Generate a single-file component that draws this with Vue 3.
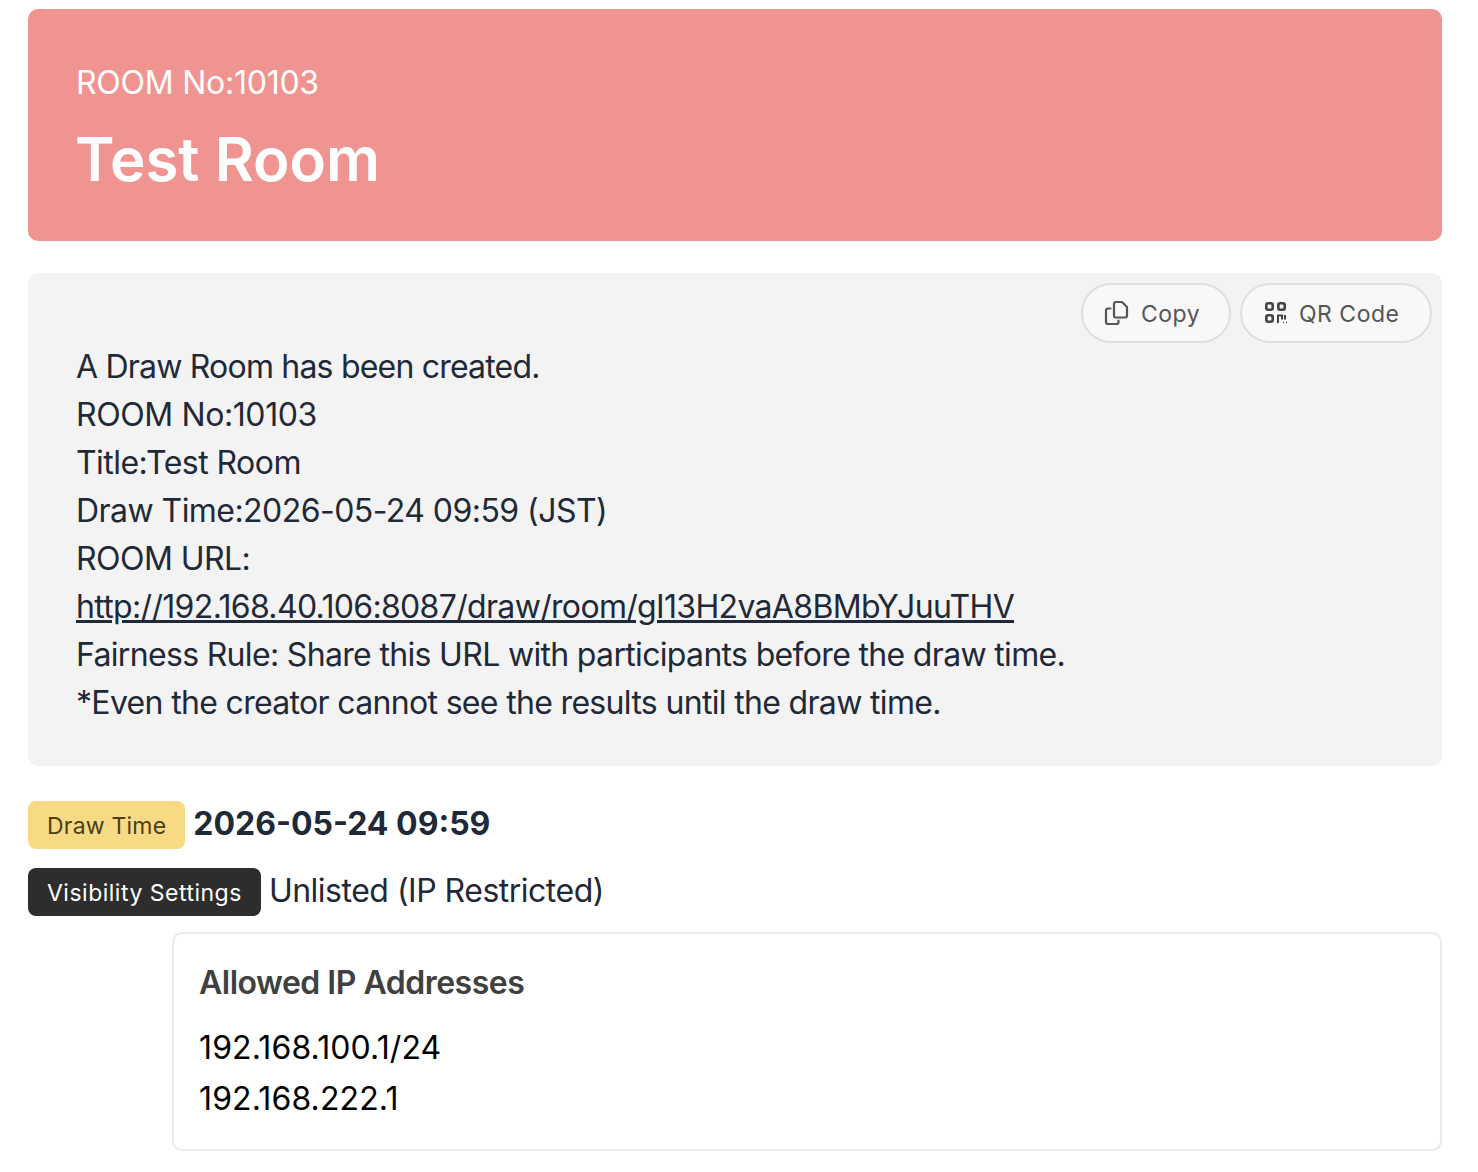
<script setup>
const lines = [
  { text: 'A Draw Room has been created.', cls: 'lead' },
  { text: 'ROOM No:10103', cls: 'num' },
  { text: 'Title:Test Room', cls: 'mid' },
  { text: 'Draw Time:2026-05-24 09:59 (JST)', cls: 'mid' },
  { text: 'ROOM URL:', cls: 'mid' },
];
const after = [
  'Fairness Rule: Share this URL with participants before the draw time.',
  '*Even the creator cannot see the results until the draw time.',
];
</script>

<template>
  <div class="page">
    <header class="hero">
      <p class="no">ROOM No:10103</p>
      <h1>Test Room</h1>
    </header>
    <section class="info">
      <div class="actions">
        <button class="btn copy">
          <svg class="ico" width="26" height="26" viewBox="0 0 26 26" fill="none" stroke="#555" stroke-width="2.200" stroke-linejoin="round" stroke-linecap="round">
            <path d="M13 2h6l5 5v8.500a2 2 0 0 1-2 2h-9a2 2 0 0 1-2-2V4a2 2 0 0 1 2-2z" />
            <path d="M7.500 8.500H5a2 2 0 0 0-2 2V22a2 2 0 0 0 2 2h8.500a2 2 0 0 0 2-2v-1.500" />
          </svg>
          <span class="lbl">Copy</span>
        </button>
        <button class="btn qr">
          <svg class="ico" width="24" height="24" viewBox="0 0 24 24" fill="none" stroke="#444" stroke-width="2.600">
            <rect x="2.300" y="2.300" width="6.400" height="6.400" rx="2" />
            <rect x="14.300" y="2.300" width="6.400" height="6.400" rx="2" />
            <rect x="2.300" y="14.300" width="6.400" height="6.400" rx="2" />
            <path d="M14 22v-7.500h4v4M21 14v4.500" stroke-width="2" />
            <path d="M19 21.500h1M22 21.500h1" stroke-width="1.600" />
          </svg>
          <span class="lbl">QR Code</span>
        </button>
      </div>
      <div class="msg">
        <div v-for="l in lines" :key="l.text" :class="l.cls">{{ l.text }}</div>
        <div class="wide"><a href="#">http://192.168.40.106:8087/draw/room/gI13H2vaA8BMbYJuuTHV</a></div>
        <div v-for="l in after" :key="l" class="wide">{{ l }}</div>
      </div>
    </section>
    <div class="row first">
      <span class="badge yellow">Draw Time</span>
      <strong>2026-05-24 09:59</strong>
    </div>
    <div class="row second">
      <span class="badge dark">Visibility Settings</span>
      <span class="vis">Unlisted (IP Restricted)</span>
    </div>
    <section class="ips">
      <h2>Allowed IP Addresses</h2>
      <div class="ip">192.168.100.1/24</div>
      <div class="ip">192.168.222.1</div>
    </section>
  </div>
</template>

<style>
body { background: #fff; }
</style>

<style scoped>
.page {
  padding: 9px 36px 20px 28px;
  font-family: Inter, "Liberation Sans", sans-serif;
  color: #1f2937;
  font-size: 32px;
  line-height: 48px;
}
.hero {
  background: #f09492;
  color: #fff;
  border-radius: 10px;
  height: 232px;
  box-sizing: border-box;
  padding: 50px 48px 0;
}
.no { margin: 0; font-size: 32px; line-height: 48px; letter-spacing: -0.25px; }
h1 { margin: 16px 0 0 -1px; font-size: 60px; line-height: 72px; font-weight: 600; }
.info {
  position: relative;
  margin-top: 32px;
  background: #f3f3f3;
  border-radius: 10px;
  height: 493px;
  box-sizing: border-box;
  padding: 70px 48px 0;
}
.actions { position: absolute; top: 10px; right: 10px; display: flex; gap: 9px; }
.btn {
  display: flex;
  align-items: center;
  height: 60px;
  box-sizing: border-box;
  background: #f8f8f8;
  border: 2px solid #dfdfdf;
  border-radius: 30px;
  font: inherit;
  font-size: 23px;
  color: #555;
  letter-spacing: 0.5px;
}
.lbl { padding-top: 2px; }
.copy { width: 150px; padding: 0 0 0 20px; gap: 12px; }
.qr { width: 192px; padding: 0 0 0 22px; gap: 11px; }
.ico { flex: none; }
.lead { letter-spacing: -0.8px; }
.wide { letter-spacing: -0.67px; }
.mid { letter-spacing: -0.55px; }
.num { letter-spacing: -0.4px; }
a { color: inherit; }
.row { display: flex; align-items: center; gap: 8px; }
.first { margin-top: 35px; height: 48px; }
.first strong { font-size: 32px; font-weight: 700; line-height: 46px; align-self: flex-start; }
.second { margin-top: 19px; height: 48px; }
.vis { letter-spacing: -0.5px; line-height: 46px; align-self: flex-start; }
.badge {
  height: 48px;
  line-height: 50px;
  padding: 0 19px;
  border-radius: 8px;
  font-size: 23px;
}
.yellow { background: #f9da84; color: #4a3f17; letter-spacing: 0.2px; }
.dark { background: #2d2d2d; color: #fff; letter-spacing: 0.5px; }
.ips {
  margin-left: 144px;
  margin-top: 16px;
  border: 2px solid #eaeaea;
  border-radius: 10px;
  height: 219px;
  box-sizing: border-box;
  padding: 26px 25px 0;
  color: #000;
}
h2 { margin: 0 0 16px; font-size: 32px; line-height: 46px; font-weight: 600; color: #404040; letter-spacing: -0.5px; }
.ip { line-height: 51px; letter-spacing: 0.12px; }
</style>
